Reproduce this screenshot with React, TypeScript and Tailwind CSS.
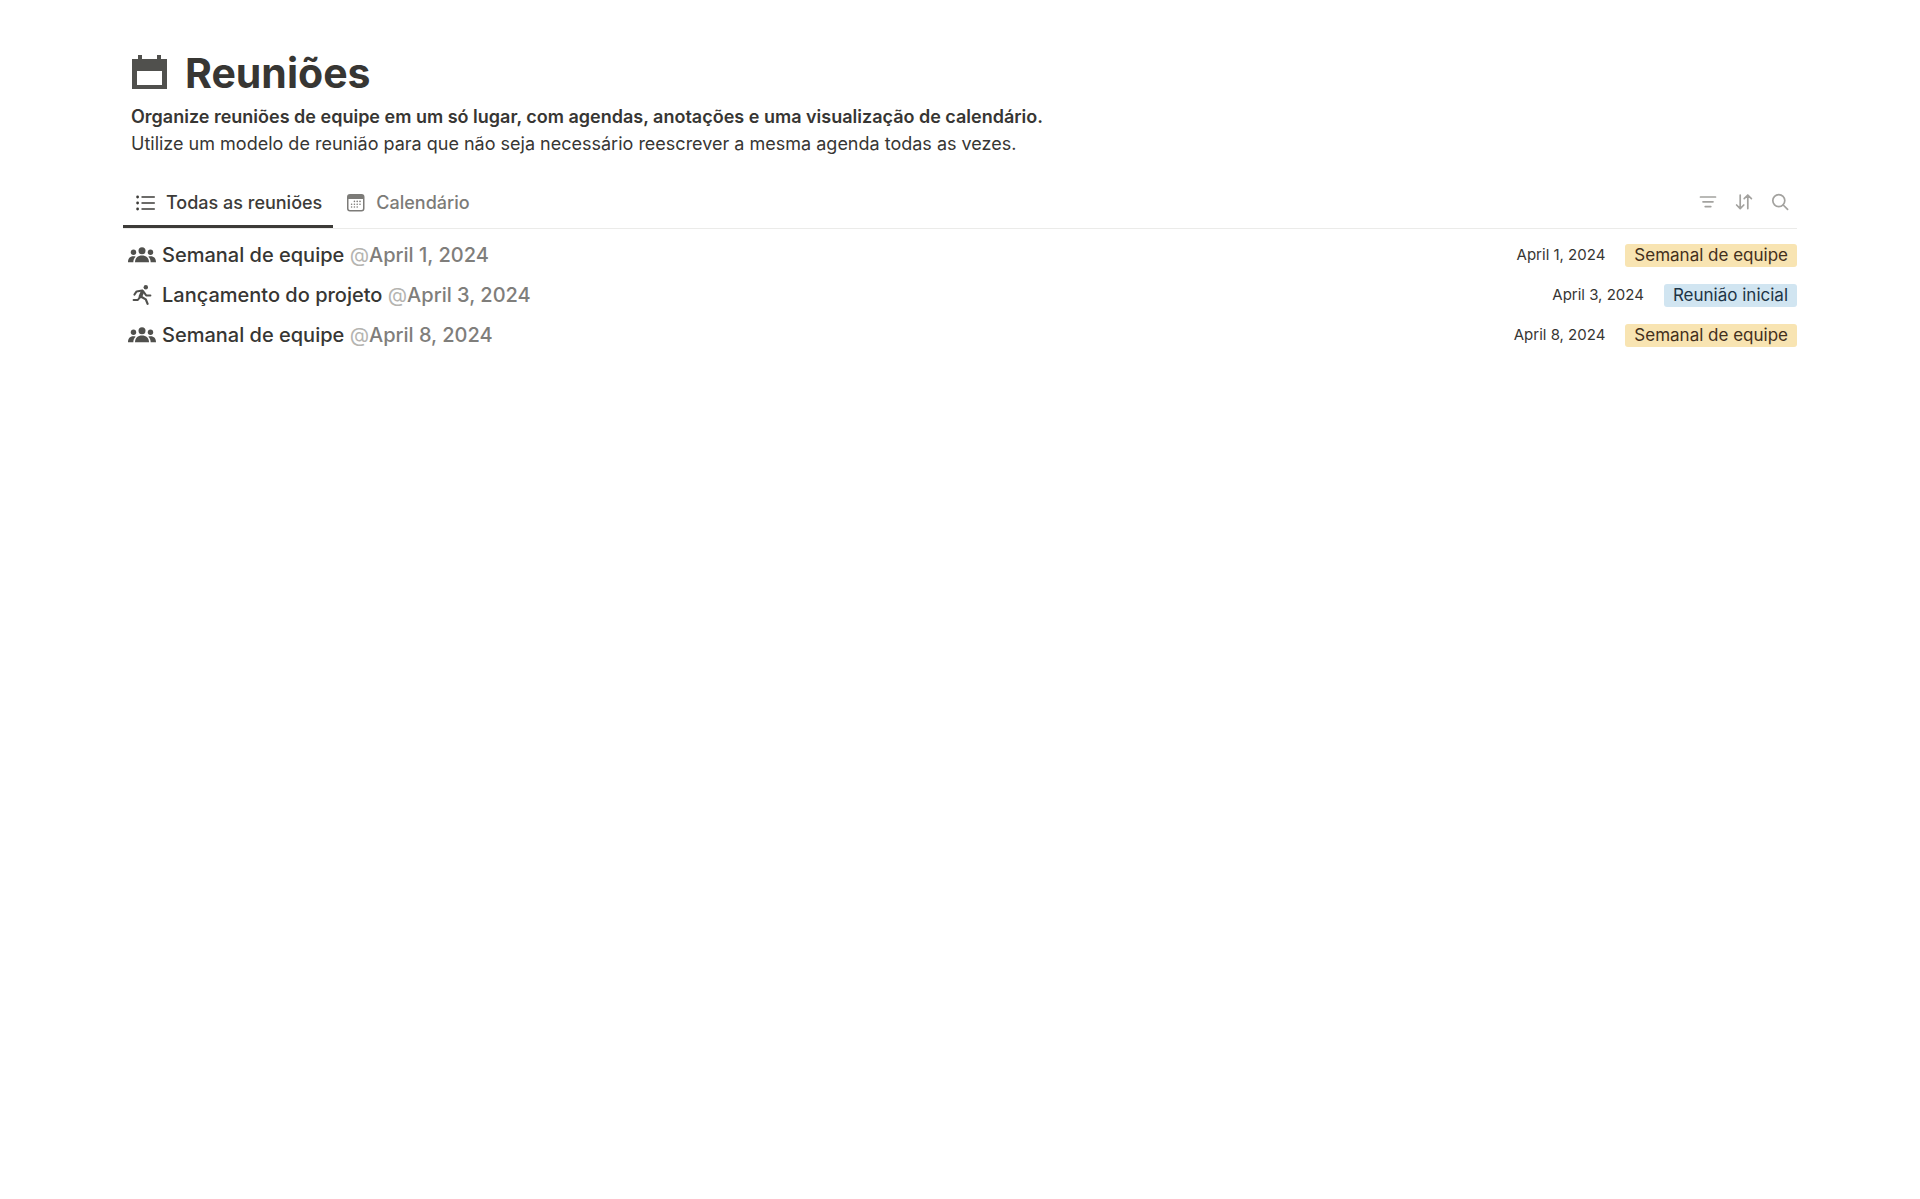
import { useState, type ReactNode } from "react";

function CalendarGlyph() {
  return (
    <svg viewBox="0 0 36 36" className="size-9 shrink-0" fill="#50504d" aria-hidden="true">
      <path fillRule="evenodd" d="M1 4h6V0h4v4h15V0h4v4h6v30H1V4zm5 12v14h25V16H6z" />
    </svg>
  );
}

function ListGlyph() {
  return (
    <svg viewBox="0 0 20 16" className="h-4 w-5 shrink-0" fill="currentColor" aria-hidden="true">
      <circle cx="1.6" cy="2" r="1.4" />
      <circle cx="1.6" cy="8" r="1.4" />
      <circle cx="1.6" cy="14" r="1.4" />
      <path d="M5.5 1.2h13.3v1.6H5.5zM5.5 7.2h13.3v1.6H5.5zM5.5 13.2h13.3v1.6H5.5z" />
    </svg>
  );
}

function MonthGlyph() {
  const dots = [
    [8.4, 8.4], [11.2, 8.4], [14, 8.4],
    [5.6, 11.2], [8.4, 11.2], [11.2, 11.2], [14, 11.2],
    [5.6, 14], [8.4, 14], [11.2, 14],
  ];
  return (
    <svg viewBox="0 0 20 20" className="size-5 shrink-0" fill="currentColor" aria-hidden="true">
      <path
        fillRule="evenodd"
        d="M4 1h11.5A3 3 0 0 1 18.500 4v11.500a3 3 0 0 1-3 3H4a3 3 0 0 1-3-3V4a3 3 0 0 1 3-3zM2.500 6v9.400A1.700 1.700 0 0 0 4.200 17.100h11.100a1.700 1.700 0 0 0 1.700-1.700V6z"
      />
      {dots.map(([x, y]) => (
        <circle key={`${x}-${y}`} cx={x} cy={y} r="0.8" />
      ))}
    </svg>
  );
}

function FilterGlyph() {
  return (
    <svg viewBox="0 0 18 18" className="size-[18px]" stroke="currentColor" strokeWidth="1.7" strokeLinecap="round" aria-hidden="true">
      <path d="M1.500 4h15M4 8.800h10M6.200 13.600h5.600" />
    </svg>
  );
}

function SortGlyph() {
  return (
    <svg viewBox="0 0 18 18" className="size-[18px]" fill="none" stroke="currentColor" strokeWidth="1.7" strokeLinecap="round" strokeLinejoin="round" aria-hidden="true">
      <path d="M5.200 2v13.400M1.600 12l3.600 3.600L8.800 12M12.800 15.600V2.200M9.200 5.600l3.600-3.600 3.600 3.600" />
    </svg>
  );
}

function SearchGlyph() {
  return (
    <svg viewBox="0 0 18 18" className="size-[18px]" fill="none" stroke="currentColor" strokeWidth="1.7" strokeLinecap="round" aria-hidden="true">
      <circle cx="7.800" cy="7.600" r="6" />
      <path d="M12.200 12l4.400 4.400" />
    </svg>
  );
}

function GroupGlyph() {
  return (
    <svg viewBox="0 0 28 16" className="h-4 w-7" fill="#50504d" aria-hidden="true">
      <circle cx="14" cy="3.800" r="3.500" />
      <circle cx="5.500" cy="5.300" r="2.700" />
      <circle cx="22.500" cy="5.300" r="2.700" />
      <path d="M7 15.200c0-4 2.800-6.600 7-6.600s7 2.600 7 6.600z" />
      <path d="M0 15.200c0-3.800 1.900-6 5.300-6 .9 0 1.700.1 2.400.5C6.200 11 5.400 12.800 5.300 15.200zM28 15.200c0-3.800-1.900-6-5.300-6-.9 0-1.700.1-2.400.5 1.500 1.300 2.300 3.100 2.400 5.500z" />
    </svg>
  );
}

function RunnerGlyph() {
  return (
    <svg viewBox="0 0 20 20" className="size-5" fill="none" stroke="#50504d" strokeLinecap="round" strokeLinejoin="round" aria-hidden="true">
      <circle cx="13.800" cy="2.200" r="2.200" fill="#50504d" stroke="none" />
      <path strokeWidth="2" d="M2.400 9.600L4.600 6.400l5.600-.8M12 7.400l2.200 3h4.200M7.800 12.400l-2 2.600H1.600" />
      <path strokeWidth="2.200" d="M9.600 12l4.200 2.400 1.800 4.400" />
      <path strokeWidth="3.600" d="M10.600 6.600l-2.200 4.800" />
    </svg>
  );
}

type Meeting = { icon: "group" | "runner"; title: string; date: string; tag: string; tone: string };

const meetings: Meeting[] = [
  { icon: "group", title: "Semanal de equipe", date: "April 1, 2024", tag: "Semanal de equipe", tone: "bg-[#f8e4b2] text-[#432f1b]" },
  { icon: "runner", title: "Lançamento do projeto", date: "April 3, 2024", tag: "Reunião inicial", tone: "bg-[#d1e5f1] text-[#1d3446]" },
  { icon: "group", title: "Semanal de equipe", date: "April 8, 2024", tag: "Semanal de equipe", tone: "bg-[#f8e4b2] text-[#432f1b]" },
];

function Tab({ active, onClick, icon, children }: { active: boolean; onClick: () => void; icon: ReactNode; children: ReactNode }) {
  return (
    <button
      type="button"
      role="tab"
      aria-selected={active}
      onClick={onClick}
      className={`flex h-[50px] items-center gap-2.5 border-b-3 pt-0.5 pr-[11px] pl-[13px] text-lg font-medium ${
        active ? "border-[#3c3b38] text-[#3c3b38]" : "border-transparent text-[#7c7b78]"
      }`}
    >
      {icon}
      {children}
    </button>
  );
}

export default function App() {
  const [tab, setTab] = useState("list");
  return (
    <main className="min-h-screen bg-white px-[123px] pt-12 font-['Inter',sans-serif] text-[#373633]">
      <header className="px-2">
        <div className="flex items-center gap-[18px]">
          <CalendarGlyph />
          <h1 className="text-[41px] leading-[50px] font-bold">Reuniões</h1>
        </div>
        <p className="mt-[5px] text-lg leading-[27px]">
          <strong className="font-semibold">
            Organize reuniões de equipe em um só lugar, com agendas, anotações e uma visualização de calendário.
          </strong>
          <br />
          Utilize um modelo de reunião para que não seja necessário reescrever a mesma agenda todas as vezes.
        </p>
      </header>

      <div className="mt-[21px] flex items-start justify-between border-b border-[#ebebe9]">
        <div role="tablist" className="flex">
          <Tab active={tab === "list"} onClick={() => setTab("list")} icon={<ListGlyph />}>
            Todas as reuniões
          </Tab>
          <Tab active={tab === "calendar"} onClick={() => setTab("calendar")} icon={<MonthGlyph />}>
            Calendário
          </Tab>
        </div>
        <div className="flex h-12 items-center gap-[18px] pr-2 text-[#a3a29f]">
          <button type="button" aria-label="Filtrar"><FilterGlyph /></button>
          <button type="button" aria-label="Ordenar"><SortGlyph /></button>
          <button type="button" aria-label="Pesquisar"><SearchGlyph /></button>
        </div>
      </div>

      <ul className="pt-[6px]">
        {meetings.map((m) => (
          <li key={m.date} className="flex h-10 items-center justify-between">
            <a href="#" className="flex items-center gap-1.5 pl-[5px] text-xl font-medium">
              <span className="flex w-7 justify-center">{m.icon === "group" ? <GroupGlyph /> : <RunnerGlyph />}</span>
              <span>
                {m.title} <span className="text-[#7f7e7b]"><span className="font-normal text-[#b5b4b1]">@</span>{m.date}</span>
              </span>
            </a>
            <div className="flex items-center gap-5">
              <time className="text-[15px]">{m.date}</time>
              <span className={`rounded-[3px] px-[9px] text-[17px] leading-[23px] ${m.tone}`}>{m.tag}</span>
            </div>
          </li>
        ))}
      </ul>
    </main>
  );
}
